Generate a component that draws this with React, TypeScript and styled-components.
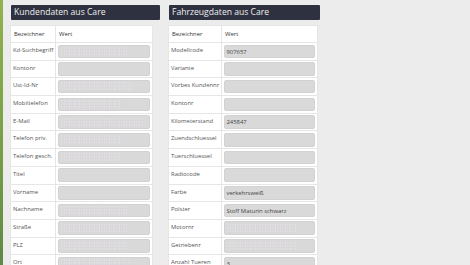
import React from 'react';
import styled, { createGlobalStyle } from 'styled-components';

const GlobalStyle = createGlobalStyle`
    html, body {
        margin: 0;
        padding: 0;
        background: #ececec;
        font-family: 'Open Sans', 'Noto Sans', sans-serif;
    }
`;

const Page = styled.div`
    display: flex;
    min-height: 100vh;
    background: #ececec;
`;

const Strip = styled.div`
    width: 3px;
    flex-shrink: 0;
    background: linear-gradient(180deg, #90b34e 0%, #7aa048 50%, #5b8945 100%);
`;

const Content = styled.div`
    display: flex;
    gap: 8px;
    padding: 5px 0 0 7px;
`;

type colProps = {
    $width: number;
};

const Column = styled.div<colProps>`
    width: ${(props) => props.$width}px;
    display: flex;
    flex-direction: column;
    gap: 5px;
`;

const SectionTitle = styled.div<colProps>`
    width: ${(props) => props.$width}px;
    margin-left: 1px;
    height: 15px;
    line-height: 15px;
    padding-left: 3px;
    box-sizing: border-box;
    background: #2e3140;
    color: #f0f0f0;
    font-size: 8.6px;
    border-radius: 1px;
`;

type tableProps = {
    $width: number;
    $labelWidth: number;
};

const DataTable = styled.table<tableProps>`
    width: ${(props) => props.$width}px;
    border-collapse: collapse;
    background: #fff;
    table-layout: fixed;
    th,
    td {
        border: 1px solid #e6e6e6;
        font-size: 5.9px;
        text-align: left;
    }
    th {
        height: 16px;
        padding: 0 3px;
        font-weight: 400;
        color: #333;
    }
    col.label {
        width: ${(props) => props.$labelWidth}px;
    }
`;

const Row = styled.tr`
    height: 17.7px;
`;

const LabelCell = styled.td`
    vertical-align: top;
    padding: 3px 2px 0;
    color: #555;
    white-space: nowrap;
    overflow: hidden;
`;

const ValueCell = styled.td`
    padding: 0 2px 0 1.5px;
    vertical-align: middle;
`;

const InputBox = styled.div`
    height: 13.5px;
    line-height: 13.5px;
    background: #d9d9d9;
    border: 1px solid #d2d2d2;
    box-sizing: border-box;
    border-radius: 2px;
    padding-left: 2px;
    font-size: 5.9px;
    color: #444;
    white-space: nowrap;
    overflow: hidden;
`;

// blurred-out personal data, as in the screenshot
const Redacted = styled.span`
    display: inline-block;
    height: 9px;
    vertical-align: middle;
    margin-top: -1px;
    background:
        repeating-linear-gradient(0deg, rgba(215, 205, 215, 0.35) 0 1px, transparent 1px 3px),
        repeating-linear-gradient(90deg, #e0dce0 0 1px, #d8dcd9 1px 3px, #e3dfe4 3px 4px, #dad6dc 4px 5px),
        #dddadd;
`;

type field = {
    label: string;
    value?: string;
    redacted?: number;
};

const customer: field[] = [
    { label: 'Kd-Suchbegriff', redacted: 67 },
    { label: 'Kontonr' },
    { label: 'Ust-Id-Nr', redacted: 72 },
    { label: 'Mobiltelefon', redacted: 60 },
    { label: 'E-Mail', redacted: 81 },
    { label: 'Telefon priv.', redacted: 62 },
    { label: 'Telefon gesch.', redacted: 60 },
    { label: 'Titel' },
    { label: 'Vorname' },
    { label: 'Nachname', redacted: 68 },
    { label: 'Straße', redacted: 67 },
    { label: 'PLZ', redacted: 67 },
    { label: 'Ort', redacted: 70 },
];

const vehicle: field[] = [
    { label: 'Modellcode', value: '907657' },
    { label: 'Variante' },
    { label: 'Vorbes Kundennr' },
    { label: 'Kontonr' },
    { label: 'Kilometerstand', value: '245847' },
    { label: 'Zuendschluessel' },
    { label: 'Tuerschluessel' },
    { label: 'Radiocode' },
    { label: 'Farbe', value: 'verkehrsweiß' },
    { label: 'Polster', value: 'Stoff Maturin schwarz' },
    { label: 'Motornr', redacted: 69 },
    { label: 'Getriebenr', redacted: 69 },
    { label: 'Anzahl Tueren', value: '3' },
];

type sectionProps = {
    title: string;
    width: number;
    titleWidth: number;
    tableWidth: number;
    labelWidth: number;
    fields: field[];
};

const Section = ({ title, width, titleWidth, tableWidth, labelWidth, fields }: sectionProps) => (
    <Column $width={width}>
        <SectionTitle $width={titleWidth}>{title}</SectionTitle>
        <DataTable $width={tableWidth} $labelWidth={labelWidth}>
            <colgroup>
                <col className="label" />
                <col />
            </colgroup>
            <thead>
                <tr>
                    <th>Bezeichner</th>
                    <th>Wert</th>
                </tr>
            </thead>
            <tbody>
                {fields.map((f) => (
                    <Row key={f.label}>
                        <LabelCell>{f.label}</LabelCell>
                        <ValueCell>
                            <InputBox>
                                {f.redacted ? <Redacted style={{ width: f.redacted }} /> : f.value}
                            </InputBox>
                        </ValueCell>
                    </Row>
                ))}
            </tbody>
        </DataTable>
    </Column>
);

const App = () => (
    <>
        <GlobalStyle />
        <Page>
            <Strip />
            <Content>
                <Section
                    title="Kundendaten aus Care"
                    width={150}
                    titleWidth={149}
                    tableWidth={143}
                    labelWidth={45}
                    fields={customer}
                />
                <Section
                    title="Fahrzeugdaten aus Care"
                    width={152}
                    titleWidth={151}
                    tableWidth={150}
                    labelWidth={53}
                    fields={vehicle}
                />
            </Content>
        </Page>
    </>
);

export default App;
